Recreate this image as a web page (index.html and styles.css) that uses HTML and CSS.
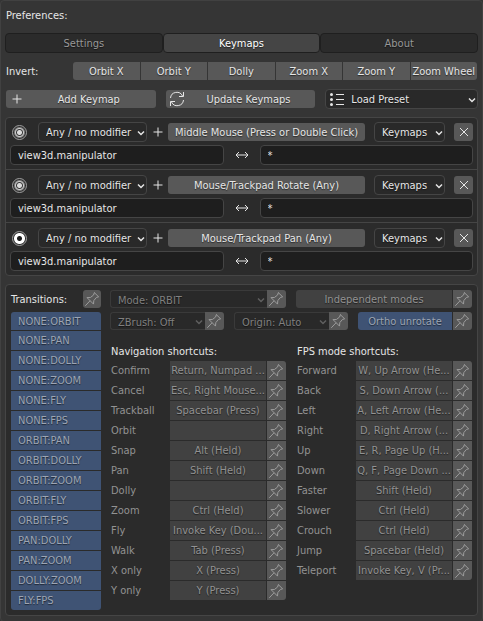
FILE: index.html
```html
<!DOCTYPE html>
<html lang="en">
<head>
<meta charset="utf-8">
<meta name="viewport" content="width=device-width, initial-scale=1">
<title>Preferences</title>
<link rel="stylesheet" href="styles.css">
</head>
<body>
<svg class="defs" aria-hidden="true">
  <symbol id="pin" viewBox="0 0 18 18"><path d="M11 2.3 15.8 7M11.3 2.7 10.6 5 7.4 7.5 4 7.6 10.5 14.1 10.8 10.6 13.4 7.5 15.5 6.8M7 10.8 2.3 15.8" /></symbol>
  <symbol id="chevron" viewBox="0 0 8 8"><path d="M1 2.5 4 5.5 7 2.5" /></symbol>
  <symbol id="plus" viewBox="0 0 10 10"><path d="M5 .5V9.5M.5 5H9.5" /></symbol>
  <symbol id="cross" viewBox="0 0 10 10"><path d="M1 1 9 9M9 1 1 9" /></symbol>
  <symbol id="swap" viewBox="0 0 14 10"><path d="M1 5H13M4 2 1 5 4 8M10 2 13 5 10 8" /></symbol>
  <symbol id="refresh" viewBox="0 0 16 16"><path d="M1.5 7A6.3 6.3 0 0 1 13.5 5M14.5 1V5.5H10M14.5 9A6.3 6.3 0 0 1 2.5 11M1.5 15V10.5H6" /></symbol>
  <symbol id="presets" viewBox="0 0 16 14"><path d="M7 2.5H15M7 7.5H15M7 12.5H15" /><path class="dots" d="M1 2.5a1.5 1.5 0 1 0 3 0a1.5 1.5 0 1 0-3 0M1 7.5a1.5 1.5 0 1 0 3 0a1.5 1.5 0 1 0-3 0M1 12.5a1.5 1.5 0 1 0 3 0a1.5 1.5 0 1 0-3 0" /></symbol>
</svg>
<main class="panel">
  <h1 class="title">Preferences:</h1>

  <nav class="tabs" role="tablist">
    <button class="tab" role="tab" aria-selected="false">Settings</button>
    <button class="tab" role="tab" aria-selected="true">Keymaps</button>
    <button class="tab" role="tab" aria-selected="false">About</button>
  </nav>

  <div class="invert">
    <span id="invert" class="label">Invert:</span>
    <div class="segments" role="group" aria-labelledby="invert">
      <button class="btn">Orbit X</button>
      <button class="btn">Orbit Y</button>
      <button class="btn">Dolly</button>
      <button class="btn">Zoom X</button>
      <button class="btn">Zoom Y</button>
      <button class="btn">Zoom Wheel</button>
    </div>
  </div>

  <div class="actions">
    <button class="btn action"><svg class="icon i10"><use href="#plus"/></svg><span>Add Keymap</span></button>
    <button class="btn action"><svg class="icon i16"><use href="#refresh"/></svg><span>Update Keymaps</span></button>
    <div class="select preset">
      <svg class="icon i16 lead"><use href="#presets"/></svg>
      <select aria-label="Preset"><option>Load Preset</option></select>
      <svg class="icon chev"><use href="#chevron"/></svg>
    </div>
  </div>

  <section class="box keymaps">
    <div class="keymap">
      <div class="bind">
        <input class="radio" type="radio" name="keymap" aria-label="Keymap 1">
        <div class="select"><select aria-label="Modifier 1"><option>Any / no modifier</option></select><svg class="icon chev"><use href="#chevron"/></svg></div>
        <svg class="icon i10"><use href="#plus"/></svg>
        <button class="btn">Middle Mouse (Press or Double Click)</button>
        <div class="select scope"><select aria-label="Scope 1"><option>Keymaps</option></select><svg class="icon chev"><use href="#chevron"/></svg></div>
        <button class="btn close" aria-label="Remove"><svg class="icon i10"><use href="#cross"/></svg></button>
      </div>
      <div class="match">
        <input type="text" aria-label="Operator 1" value="view3d.manipulator">
        <svg class="icon swap"><use href="#swap"/></svg>
        <input type="text" aria-label="Insert after 1" value="*">
      </div>
    </div>
    <div class="keymap">
      <div class="bind">
        <input class="radio" type="radio" name="keymap" aria-label="Keymap 2">
        <div class="select"><select aria-label="Modifier 2"><option>Any / no modifier</option></select><svg class="icon chev"><use href="#chevron"/></svg></div>
        <svg class="icon i10"><use href="#plus"/></svg>
        <button class="btn">Mouse/Trackpad Rotate (Any)</button>
        <div class="select scope"><select aria-label="Scope 2"><option>Keymaps</option></select><svg class="icon chev"><use href="#chevron"/></svg></div>
        <button class="btn close" aria-label="Remove"><svg class="icon i10"><use href="#cross"/></svg></button>
      </div>
      <div class="match">
        <input type="text" aria-label="Operator 2" value="view3d.manipulator">
        <svg class="icon swap"><use href="#swap"/></svg>
        <input type="text" aria-label="Insert after 2" value="*">
      </div>
    </div>
    <div class="keymap">
      <div class="bind">
        <input class="radio" type="radio" name="keymap" aria-label="Keymap 3" checked>
        <div class="select"><select aria-label="Modifier 3"><option>Any / no modifier</option></select><svg class="icon chev"><use href="#chevron"/></svg></div>
        <svg class="icon i10"><use href="#plus"/></svg>
        <button class="btn">Mouse/Trackpad Pan (Any)</button>
        <div class="select scope"><select aria-label="Scope 3"><option>Keymaps</option></select><svg class="icon chev"><use href="#chevron"/></svg></div>
        <button class="btn close" aria-label="Remove"><svg class="icon i10"><use href="#cross"/></svg></button>
      </div>
      <div class="match">
        <input type="text" aria-label="Operator 3" value="view3d.manipulator">
        <svg class="icon swap"><use href="#swap"/></svg>
        <input type="text" aria-label="Insert after 3" value="*">
      </div>
    </div>
  </section>

  <section class="box details">
    <div class="transitions">
      <div class="heading"><h2>Transitions:</h2><button class="pin single" aria-label="Pin transitions"><svg><use href="#pin"/></svg></button></div>
      <div class="list">
        <button>NONE:ORBIT</button>
        <button>NONE:PAN</button>
        <button>NONE:DOLLY</button>
        <button>NONE:ZOOM</button>
        <button>NONE:FLY</button>
        <button>NONE:FPS</button>
        <button>ORBIT:PAN</button>
        <button>ORBIT:DOLLY</button>
        <button>ORBIT:ZOOM</button>
        <button>ORBIT:FLY</button>
        <button>ORBIT:FPS</button>
        <button>PAN:DOLLY</button>
        <button>PAN:ZOOM</button>
        <button>DOLLY:ZOOM</button>
        <button>FLY:FPS</button>
      </div>
    </div>

    <div class="options">
      <div class="row two">
        <div class="pinned"><div class="select dim"><select aria-label="Mode"><option>Mode: ORBIT</option></select><svg class="icon chev"><use href="#chevron"/></svg></div><button class="pin" aria-label="Pin mode"><svg><use href="#pin"/></svg></button></div>
        <div class="pinned"><button class="key">Independent modes</button><button class="pin" aria-label="Pin independent modes"><svg><use href="#pin"/></svg></button></div>
      </div>
      <div class="row three">
        <div class="pinned"><div class="select dim"><select aria-label="ZBrush"><option>ZBrush: Off</option></select><svg class="icon chev"><use href="#chevron"/></svg></div><button class="pin" aria-label="Pin ZBrush"><svg><use href="#pin"/></svg></button></div>
        <div class="pinned"><div class="select dim"><select aria-label="Origin"><option>Origin: Auto</option></select><svg class="icon chev"><use href="#chevron"/></svg></div><button class="pin" aria-label="Pin origin"><svg><use href="#pin"/></svg></button></div>
        <div class="pinned"><button class="key on">Ortho unrotate</button><button class="pin" aria-label="Pin ortho unrotate"><svg><use href="#pin"/></svg></button></div>
      </div>

      <div class="row two shortcuts">
        <div>
          <h2>Navigation shortcuts:</h2>
          <div class="keys">
            <label for="n1">Confirm</label><button class="key" id="n1">Return, Numpad ...</button><button class="pin" aria-label="Pin"><svg><use href="#pin"/></svg></button>
            <label for="n2">Cancel</label><button class="key" id="n2">Esc, Right Mouse...</button><button class="pin" aria-label="Pin"><svg><use href="#pin"/></svg></button>
            <label for="n3">Trackball</label><button class="key" id="n3">Spacebar (Press)</button><button class="pin" aria-label="Pin"><svg><use href="#pin"/></svg></button>
            <label for="n4">Orbit</label><button class="key" id="n4"></button><button class="pin" aria-label="Pin"><svg><use href="#pin"/></svg></button>
            <label for="n5">Snap</label><button class="key" id="n5">Alt (Held)</button><button class="pin" aria-label="Pin"><svg><use href="#pin"/></svg></button>
            <label for="n6">Pan</label><button class="key" id="n6">Shift (Held)</button><button class="pin" aria-label="Pin"><svg><use href="#pin"/></svg></button>
            <label for="n7">Dolly</label><button class="key" id="n7"></button><button class="pin" aria-label="Pin"><svg><use href="#pin"/></svg></button>
            <label for="n8">Zoom</label><button class="key" id="n8">Ctrl (Held)</button><button class="pin" aria-label="Pin"><svg><use href="#pin"/></svg></button>
            <label for="n9">Fly</label><button class="key" id="n9">Invoke Key (Dou...</button><button class="pin" aria-label="Pin"><svg><use href="#pin"/></svg></button>
            <label for="n10">Walk</label><button class="key" id="n10">Tab (Press)</button><button class="pin" aria-label="Pin"><svg><use href="#pin"/></svg></button>
            <label for="n11">X only</label><button class="key" id="n11">X (Press)</button><button class="pin" aria-label="Pin"><svg><use href="#pin"/></svg></button>
            <label for="n12">Y only</label><button class="key" id="n12">Y (Press)</button><button class="pin" aria-label="Pin"><svg><use href="#pin"/></svg></button>
          </div>
        </div>
        <div>
          <h2>FPS mode shortcuts:</h2>
          <div class="keys">
            <label for="f1">Forward</label><button class="key" id="f1">W, Up Arrow (He...</button><button class="pin" aria-label="Pin"><svg><use href="#pin"/></svg></button>
            <label for="f2">Back</label><button class="key" id="f2">S, Down Arrow (...</button><button class="pin" aria-label="Pin"><svg><use href="#pin"/></svg></button>
            <label for="f3">Left</label><button class="key" id="f3">A, Left Arrow (He...</button><button class="pin" aria-label="Pin"><svg><use href="#pin"/></svg></button>
            <label for="f4">Right</label><button class="key" id="f4">D, Right Arrow (...</button><button class="pin" aria-label="Pin"><svg><use href="#pin"/></svg></button>
            <label for="f5">Up</label><button class="key" id="f5">E, R, Page Up (H...</button><button class="pin" aria-label="Pin"><svg><use href="#pin"/></svg></button>
            <label for="f6">Down</label><button class="key" id="f6">Q, F, Page Down ...</button><button class="pin" aria-label="Pin"><svg><use href="#pin"/></svg></button>
            <label for="f7">Faster</label><button class="key" id="f7">Shift (Held)</button><button class="pin" aria-label="Pin"><svg><use href="#pin"/></svg></button>
            <label for="f8">Slower</label><button class="key" id="f8">Ctrl (Held)</button><button class="pin" aria-label="Pin"><svg><use href="#pin"/></svg></button>
            <label for="f9">Crouch</label><button class="key" id="f9">Ctrl (Held)</button><button class="pin" aria-label="Pin"><svg><use href="#pin"/></svg></button>
            <label for="f10">Jump</label><button class="key" id="f10">Spacebar (Held)</button><button class="pin" aria-label="Pin"><svg><use href="#pin"/></svg></button>
            <label for="f11">Teleport</label><button class="key" id="f11">Invoke Key, V (Pr...</button><button class="pin" aria-label="Pin"><svg><use href="#pin"/></svg></button>
          </div>
        </div>
      </div>
    </div>
  </section>
</main>
</body>
</html>
```
FILE: styles.css
```css
* { box-sizing: border-box; }

body {
  margin: 0;
  background: #353535;
  color: #e6e6e6;
}

body, button, input, select {
  font-family: "DejaVu Sans Condensed", "DejaVu Sans", sans-serif;
  font-size: 11px;
  line-height: 18px;
}

h1, h2 {
  margin: 0;
  font-size: 11px;
  font-weight: 400;
}

button {
  border: 0;
  padding: 0;
  color: inherit;
  white-space: nowrap;
  text-shadow: 0 1px 1px #0008;
}

.defs { position: absolute; width: 0; height: 0; }

.panel {
  min-height: 100vh;
  padding: 6px 4px 5px;
  border: 1px solid #414141;
  border-radius: 4px;
}

.title { padding-left: 1px; }

/* Icons */
.icon { display: block; fill: none; stroke: #e6e6e6; flex: none; }
.i10 { width: 10px; height: 10px; }
.i16 { width: 16px; height: 16px; }
.dots { fill: #e6e6e6; stroke: none; }
.swap { width: 14px; height: 10px; justify-self: center; }

/* Tabs */
.tabs {
  display: grid;
  grid-template-columns: repeat(3, 1fr);
  margin-top: 8px;
}
.tab {
  height: 20px;
  padding-top: 1px;
  border: 1px solid #1f1f1f;
  border-radius: 4px;
  background: #2b2b2b;
  color: #989898;
}
.tab[aria-selected="true"] { background: #454545; color: #fff; }

/* Buttons */
.btn {
  height: 18px;
  min-width: 0;
  padding-top: 1px;
  border-radius: 3px;
  background: #585858;
}
.invert {
  display: grid;
  grid-template-columns: 67px 1fr;
  height: 18px;
  margin: 9px 1px 0;
}
.label { padding-top: 1px; }
.segments {
  display: grid;
  grid-template-columns: repeat(6, 1fr);
  gap: 1px;
}
.segments .btn { border-radius: 0; }
.segments .btn:first-child { border-radius: 3px 0 0 3px; }
.segments .btn:last-child { border-radius: 0 3px 3px 0; }

.actions {
  display: grid;
  grid-template-columns: 150fr 150fr 153fr;
  gap: 10px;
  align-items: center;
  margin: 9px 0 0 1px;
}
.action { display: flex; align-items: center; padding: 0 3px; }
.action .i10 { margin: 0 3px; }
.action span { flex: 1; padding-top: 1px; }

/* Drop-downs and fields */
.select { position: relative; display: flex; min-width: 0; }
.select select {
  appearance: none;
  width: 100%;
  height: 20px;
  padding: 1px 12px 0 7px;
  border: 1px solid #454545;
  border-radius: 4px;
  background: #292929;
  color: inherit;
  text-shadow: 0 1px 1px #0008;
}
.chev {
  position: absolute;
  right: 2px;
  top: 7px;
  width: 8px;
  height: 8px;
  stroke-width: 1.5px;
}
.preset select { padding-left: 25px; }
.lead { position: absolute; left: 4px; top: 2px; }

input[type="text"] {
  width: 100%;
  height: 20px;
  padding: 0 7px;
  border: 1px solid #454545;
  border-radius: 4px;
  background: #1e1e1e;
  color: inherit;
}

/* Boxes */
.box {
  border: 1px solid #454545;
  border-radius: 4px;
  background: #2b2b2b;
}
.keymaps { margin-top: 8px; }
.keymap { padding: 4px; }
.keymap + .keymap { border-top: 1px solid #454545; padding-top: 5px; }

.bind {
  display: grid;
  grid-template-columns: 28px 109px 21px 1fr 9px 71px 9px 19px;
  align-items: center;
}
.bind > .i10 { justify-self: center; }
.bind > .scope { grid-column: 6; }
.bind > .close { grid-column: 8; display: grid; place-items: center; padding: 0; }
.radio {
  appearance: none;
  width: 15px;
  height: 15px;
  margin: 0 2px;
  border: 1px solid #a0a0a0;
  border-radius: 50%;
  background: radial-gradient(circle, #dcdcdc 1px, #dcdcdc 2px, #3a3a3a 3px, #cccccc 4px, #cccccc 4px, #2b2b2b 6px);
}
.radio:checked {
  background: radial-gradient(circle, #1c1c1c 2px, #fff 3px, #fff 5px, #2b2b2b 6px);
}
.match {
  display: grid;
  grid-template-columns: 1fr 36px 1fr;
  align-items: center;
  margin-top: 3px;
}

/* Details */
.details {
  display: grid;
  grid-template-columns: 90px 1fr;
  gap: 9px;
  margin-top: 8px;
  padding: 5px;
}
.heading {
  display: flex;
  justify-content: space-between;
  height: 18px;
}
.heading h2 { padding-top: 1px; }
.list {
  display: grid;
  gap: 1px;
  margin-top: 4px;
  border-radius: 3px;
  overflow: hidden;
}
.list button {
  height: 19px;
  padding: 1px 0 0 7px;
  background: #3f5374;
  color: #9da5b3;
  text-align: left;
}
.list button:first-child { height: 18px; }

.row { display: grid; gap: 10px; }
.two { grid-template-columns: 1fr 1fr; }
.three { grid-template-columns: repeat(3, 1fr); margin-top: 4px; }
.pinned { display: grid; grid-template-columns: 1fr 19px; }
.dim { color: #808080; }
.dim select {
  height: 18px;
  border-color: #3a3a3a;
  border-right: 0;
  border-radius: 3px 0 0 3px;
}
.dim .chev { top: 6px; stroke: #606060; }

.key {
  min-width: 0;
  height: 19px;
  margin-right: 1px;
  background: #414141;
  color: #929292;
}
.pinned .key { height: 18px; padding-top: 1px; border-radius: 3px 0 0 3px; }
.key.on { background: #3f5374; color: #9da5b3; }
.pin {
  height: 19px;
  background: #585858;
}
.pin svg {
  display: block;
  width: 18px;
  height: 18px;
  fill: none;
  stroke: #9c9c9c;
}
.pinned .pin { height: 18px; border-radius: 0 3px 3px 0; }
.pin.single { width: 18px; height: 18px; border-radius: 3px; }

.shortcuts { margin-top: 13px; align-items: start; }
.shortcuts h2 { padding-left: 1px; }
.keys {
  display: grid;
  grid-template-columns: 60px 1fr 19px;
  row-gap: 1px;
  border-radius: 3px;
  overflow: hidden;
}
.keys label { height: 19px; padding: 1px 0 0 1px; color: #929292; }
```
